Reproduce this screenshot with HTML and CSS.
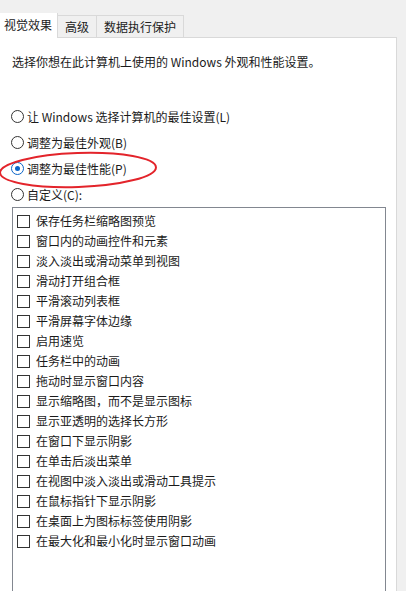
FILE: index.html
```html
<!DOCTYPE html>
<html lang="zh-CN">
<head>
<meta charset="utf-8">
<link rel="stylesheet" href="styles.css">
</head>
<body>
<div class="window">
  <div class="tabs">
    <div class="tab active">视觉效果</div>
    <div class="tab">高级</div>
    <div class="tab">数据执行保护</div>
  </div>
  <div class="panel">
    <p class="intro">选择你想在此计算机上使用的 Windows 外观和性能设置。</p>
    <div class="radios">
      <div class="radio"><span class="dot"></span>让 Windows 选择计算机的最佳设置(L)</div>
      <div class="radio"><span class="dot"></span>调整为最佳外观(B)</div>
      <div class="radio"><span class="dot on"></span>调整为最佳性能(P)</div>
      <div class="radio"><span class="dot"></span>自定义(C):</div>
    </div>
    <div class="listbox">
      <div class="item"><span class="box"></span>保存任务栏缩略图预览</div>
      <div class="item"><span class="box"></span>窗口内的动画控件和元素</div>
      <div class="item"><span class="box"></span>淡入淡出或滑动菜单到视图</div>
      <div class="item"><span class="box"></span>滑动打开组合框</div>
      <div class="item"><span class="box"></span>平滑滚动列表框</div>
      <div class="item"><span class="box"></span>平滑屏幕字体边缘</div>
      <div class="item"><span class="box"></span>启用速览</div>
      <div class="item"><span class="box"></span>任务栏中的动画</div>
      <div class="item"><span class="box"></span>拖动时显示窗口内容</div>
      <div class="item"><span class="box"></span>显示缩略图，而不是显示图标</div>
      <div class="item"><span class="box"></span>显示亚透明的选择长方形</div>
      <div class="item"><span class="box"></span>在窗口下显示阴影</div>
      <div class="item"><span class="box"></span>在单击后淡出菜单</div>
      <div class="item"><span class="box"></span>在视图中淡入淡出或滑动工具提示</div>
      <div class="item"><span class="box"></span>在鼠标指针下显示阴影</div>
      <div class="item"><span class="box"></span>在桌面上为图标标签使用阴影</div>
      <div class="item"><span class="box"></span>在最大化和最小化时显示窗口动画</div>
    </div>
  </div>
  <svg class="mark" width="162" height="44" viewBox="0 0 162 44">
    <ellipse cx="79" cy="22" rx="78" ry="17" fill="none" stroke="#e3242b" stroke-width="2" transform="rotate(-2 79 22)"/>
  </svg>
</div>
</body>
</html>
```

FILE: styles.css
```css
html, body {
  margin: 0;
  padding: 0;
  background: #f0f0f0;
}
body {
  font-family: "Noto Sans CJK SC", "Microsoft YaHei", sans-serif;
  font-size: 12px;
  color: #1a1a1a;
  width: 406px;
  height: 591px;
  overflow: hidden;
}
.window {
  position: relative;
  height: 591px;
}
.tabs {
  display: flex;
  align-items: flex-end;
  padding-top: 13px;
  height: 24px;
  position: relative;
  z-index: 1;
}
.tab {
  height: 21px;
  line-height: 21px;
  padding: 0 7px;
  border: 1px solid #d9d9d9;
  border-bottom: none;
  border-left: none;
  background: #f0f0f0;
  color: #222;
}
.tab.active {
  height: 25px;
  line-height: 23px;
  background: #fff;
  padding: 0 5px 0 4px;
  margin-bottom: -1px;
  border-top: none;
}
.panel {
  width: 396px;
  height: 553px;
  background: #fff;
  border: 1px solid #d9d9d9;
  border-left: none;
  border-bottom: none;
  box-sizing: content-box;
}
.intro {
  margin: 15px 0 0 12px;
  line-height: 17px;
}
.radios {
  margin-top: 38px;
  padding-left: 11px;
  display: flex;
  flex-direction: column;
  gap: 9px;
}
.radio {
  display: flex;
  align-items: center;
  height: 17px;
  line-height: 17px;
}
.dot {
  width: 11px;
  height: 11px;
  border: 1px solid #333;
  border-radius: 50%;
  margin-right: 3px;
  box-sizing: content-box;
  position: relative;
  flex: none;
}
.dot.on {
  border-color: #0a64c8;
}
.dot.on::after {
  content: "";
  position: absolute;
  left: 3px;
  top: 3px;
  width: 5px;
  height: 5px;
  border-radius: 50%;
  background: #0a64c8;
}
.listbox {
  margin: 4px 0 0 12px;
  width: 372px;
  height: 400px;
  border: 1px solid #828790;
  border-bottom: none;
  padding-top: 3px;
}
.item {
  display: flex;
  align-items: center;
  height: 20px;
  line-height: 20px;
  padding-left: 4px;
}
.box {
  width: 11px;
  height: 11px;
  border: 1px solid #333;
  margin-right: 6px;
  flex: none;
}
.mark {
  position: absolute;
  left: -1px;
  top: 148px;
}
```
